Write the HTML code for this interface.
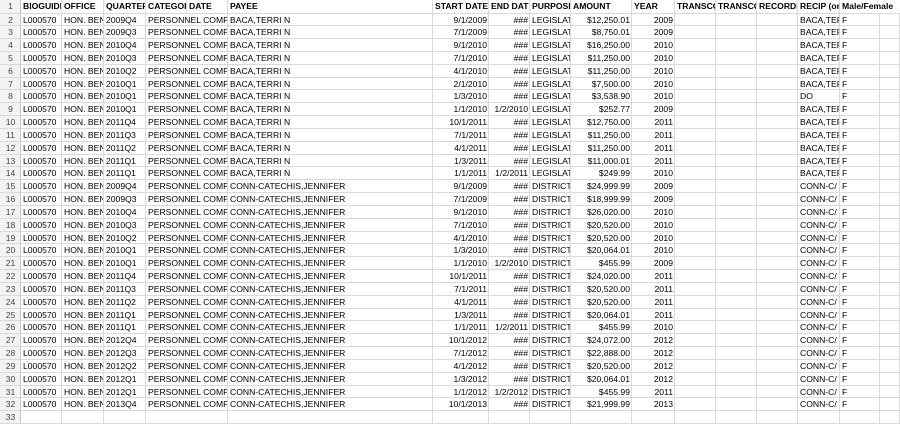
<!DOCTYPE html>
<html><head><style>
body{margin:0;width:900px;height:416px;overflow:hidden;background:#fff;font-family:"Liberation Sans",Arial,sans-serif;font-size:8.6px;color:#000}
.r{display:flex;height:12.83px;line-height:12.83px;white-space:nowrap}
.h{height:13.5px;line-height:13.5px;font-weight:bold}
.r>span{box-sizing:border-box;border-right:1px solid #dadada;border-bottom:1px solid #dadada;overflow:hidden;padding:0 1px 0 2px;flex:none}
.r>span:nth-child(1){width:21px;background:#f3f3f3;color:#444;text-align:center;font-weight:normal;border-right:1px solid #c8c8c8}
.r>span:nth-child(2){width:41px}
.r>span:nth-child(3){width:42px}
.r>span:nth-child(4){width:42px}
.r>span:nth-child(5){width:82px}
.r>span:nth-child(6){width:205px}
.r>span:nth-child(7){width:56px;text-align:right}
.r>span:nth-child(8){width:41px;text-align:right}
.r>span:nth-child(9){width:41px}
.r>span:nth-child(10){width:61px;text-align:right}
.r>span:nth-child(11){width:43px;text-align:right}
.r>span:nth-child(12){width:41px}
.r>span:nth-child(13){width:41px}
.r>span:nth-child(14){width:41px}
.r>span:nth-child(15){width:42px}
.r>span:nth-child(16){width:40px}
.r>span:nth-child(17){width:20px}
.h>span.hh{text-align:left}
</style></head><body>
<div class="r h"><span>1</span><span class="hh" style="width:41px">BIOGUIDE</span><span class="hh" style="width:42px">OFFICE</span><span class="hh" style="width:42px">QUARTER</span><span class="hh" style="width:41px">CATEGOR</span><span class="hh" style="width:41px">DATE</span><span class="hh" style="width:205px">PAYEE</span><span class="hh" style="width:56px">START DATE</span><span class="hh" style="width:41px">END DATE</span><span class="hh" style="width:41px">PURPOSE</span><span class="hh" style="width:61px">AMOUNT</span><span class="hh" style="width:43px">YEAR</span><span class="hh" style="width:41px">TRANSCO</span><span class="hh" style="width:41px">TRANSCO</span><span class="hh" style="width:41px">RECORDI</span><span class="hh" style="width:42px">RECIP (or</span><span class="hh" style="width:60px;border-right:none">Male/Female</span></div>
<div class="r"><span>2</span><span>L000570</span><span>HON. BEN</span><span>2009Q4</span><span>PERSONNEL COMPE</span><span>BACA,TERRI N</span><span>9/1/2009</span><span>###</span><span>LEGISLAT</span><span>$12,250.01</span><span>2009</span><span></span><span></span><span></span><span>BACA,TER</span><span>F</span><span></span></div>
<div class="r"><span>3</span><span>L000570</span><span>HON. BEN</span><span>2009Q3</span><span>PERSONNEL COMPE</span><span>BACA,TERRI N</span><span>7/1/2009</span><span>###</span><span>LEGISLAT</span><span>$8,750.01</span><span>2009</span><span></span><span></span><span></span><span>BACA,TER</span><span>F</span><span></span></div>
<div class="r"><span>4</span><span>L000570</span><span>HON. BEN</span><span>2010Q4</span><span>PERSONNEL COMPE</span><span>BACA,TERRI N</span><span>9/1/2010</span><span>###</span><span>LEGISLAT</span><span>$16,250.00</span><span>2010</span><span></span><span></span><span></span><span>BACA,TER</span><span>F</span><span></span></div>
<div class="r"><span>5</span><span>L000570</span><span>HON. BEN</span><span>2010Q3</span><span>PERSONNEL COMPE</span><span>BACA,TERRI N</span><span>7/1/2010</span><span>###</span><span>LEGISLAT</span><span>$11,250.00</span><span>2010</span><span></span><span></span><span></span><span>BACA,TER</span><span>F</span><span></span></div>
<div class="r"><span>6</span><span>L000570</span><span>HON. BEN</span><span>2010Q2</span><span>PERSONNEL COMPE</span><span>BACA,TERRI N</span><span>4/1/2010</span><span>###</span><span>LEGISLAT</span><span>$11,250.00</span><span>2010</span><span></span><span></span><span></span><span>BACA,TER</span><span>F</span><span></span></div>
<div class="r"><span>7</span><span>L000570</span><span>HON. BEN</span><span>2010Q1</span><span>PERSONNEL COMPE</span><span>BACA,TERRI N</span><span>2/1/2010</span><span>###</span><span>LEGISLAT</span><span>$7,500.00</span><span>2010</span><span></span><span></span><span></span><span>BACA,TER</span><span>F</span><span></span></div>
<div class="r"><span>8</span><span>L000570</span><span>HON. BEN</span><span>2010Q1</span><span>PERSONNEL COMPE</span><span>BACA,TERRI N</span><span>1/3/2010</span><span>###</span><span>LEGISLAT</span><span>$3,538.90</span><span>2010</span><span></span><span></span><span></span><span>DO</span><span>F</span><span></span></div>
<div class="r"><span>9</span><span>L000570</span><span>HON. BEN</span><span>2010Q1</span><span>PERSONNEL COMPE</span><span>BACA,TERRI N</span><span>1/1/2010</span><span>1/2/2010</span><span>LEGISLAT</span><span>$252.77</span><span>2009</span><span></span><span></span><span></span><span>BACA,TER</span><span>F</span><span></span></div>
<div class="r"><span>10</span><span>L000570</span><span>HON. BEN</span><span>2011Q4</span><span>PERSONNEL COMPE</span><span>BACA,TERRI N</span><span>10/1/2011</span><span>###</span><span>LEGISLAT</span><span>$12,750.00</span><span>2011</span><span></span><span></span><span></span><span>BACA,TER</span><span>F</span><span></span></div>
<div class="r"><span>11</span><span>L000570</span><span>HON. BEN</span><span>2011Q3</span><span>PERSONNEL COMPE</span><span>BACA,TERRI N</span><span>7/1/2011</span><span>###</span><span>LEGISLAT</span><span>$11,250.00</span><span>2011</span><span></span><span></span><span></span><span>BACA,TER</span><span>F</span><span></span></div>
<div class="r"><span>12</span><span>L000570</span><span>HON. BEN</span><span>2011Q2</span><span>PERSONNEL COMPE</span><span>BACA,TERRI N</span><span>4/1/2011</span><span>###</span><span>LEGISLAT</span><span>$11,250.00</span><span>2011</span><span></span><span></span><span></span><span>BACA,TER</span><span>F</span><span></span></div>
<div class="r"><span>13</span><span>L000570</span><span>HON. BEN</span><span>2011Q1</span><span>PERSONNEL COMPE</span><span>BACA,TERRI N</span><span>1/3/2011</span><span>###</span><span>LEGISLAT</span><span>$11,000.01</span><span>2011</span><span></span><span></span><span></span><span>BACA,TER</span><span>F</span><span></span></div>
<div class="r"><span>14</span><span>L000570</span><span>HON. BEN</span><span>2011Q1</span><span>PERSONNEL COMPE</span><span>BACA,TERRI N</span><span>1/1/2011</span><span>1/2/2011</span><span>LEGISLAT</span><span>$249.99</span><span>2010</span><span></span><span></span><span></span><span>BACA,TER</span><span>F</span><span></span></div>
<div class="r"><span>15</span><span>L000570</span><span>HON. BEN</span><span>2009Q4</span><span>PERSONNEL COMPE</span><span>CONN-CATECHIS,JENNIFER</span><span>9/1/2009</span><span>###</span><span>DISTRICT</span><span>$24,999.99</span><span>2009</span><span></span><span></span><span></span><span>CONN-C/</span><span>F</span><span></span></div>
<div class="r"><span>16</span><span>L000570</span><span>HON. BEN</span><span>2009Q3</span><span>PERSONNEL COMPE</span><span>CONN-CATECHIS,JENNIFER</span><span>7/1/2009</span><span>###</span><span>DISTRICT</span><span>$18,999.99</span><span>2009</span><span></span><span></span><span></span><span>CONN-C/</span><span>F</span><span></span></div>
<div class="r"><span>17</span><span>L000570</span><span>HON. BEN</span><span>2010Q4</span><span>PERSONNEL COMPE</span><span>CONN-CATECHIS,JENNIFER</span><span>9/1/2010</span><span>###</span><span>DISTRICT</span><span>$26,020.00</span><span>2010</span><span></span><span></span><span></span><span>CONN-C/</span><span>F</span><span></span></div>
<div class="r"><span>18</span><span>L000570</span><span>HON. BEN</span><span>2010Q3</span><span>PERSONNEL COMPE</span><span>CONN-CATECHIS,JENNIFER</span><span>7/1/2010</span><span>###</span><span>DISTRICT</span><span>$20,520.00</span><span>2010</span><span></span><span></span><span></span><span>CONN-C/</span><span>F</span><span></span></div>
<div class="r"><span>19</span><span>L000570</span><span>HON. BEN</span><span>2010Q2</span><span>PERSONNEL COMPE</span><span>CONN-CATECHIS,JENNIFER</span><span>4/1/2010</span><span>###</span><span>DISTRICT</span><span>$20,520.00</span><span>2010</span><span></span><span></span><span></span><span>CONN-C/</span><span>F</span><span></span></div>
<div class="r"><span>20</span><span>L000570</span><span>HON. BEN</span><span>2010Q1</span><span>PERSONNEL COMPE</span><span>CONN-CATECHIS,JENNIFER</span><span>1/3/2010</span><span>###</span><span>DISTRICT</span><span>$20,064.01</span><span>2010</span><span></span><span></span><span></span><span>CONN-C/</span><span>F</span><span></span></div>
<div class="r"><span>21</span><span>L000570</span><span>HON. BEN</span><span>2010Q1</span><span>PERSONNEL COMPE</span><span>CONN-CATECHIS,JENNIFER</span><span>1/1/2010</span><span>1/2/2010</span><span>DISTRICT</span><span>$455.99</span><span>2009</span><span></span><span></span><span></span><span>CONN-C/</span><span>F</span><span></span></div>
<div class="r"><span>22</span><span>L000570</span><span>HON. BEN</span><span>2011Q4</span><span>PERSONNEL COMPE</span><span>CONN-CATECHIS,JENNIFER</span><span>10/1/2011</span><span>###</span><span>DISTRICT</span><span>$24,020.00</span><span>2011</span><span></span><span></span><span></span><span>CONN-C/</span><span>F</span><span></span></div>
<div class="r"><span>23</span><span>L000570</span><span>HON. BEN</span><span>2011Q3</span><span>PERSONNEL COMPE</span><span>CONN-CATECHIS,JENNIFER</span><span>7/1/2011</span><span>###</span><span>DISTRICT</span><span>$20,520.00</span><span>2011</span><span></span><span></span><span></span><span>CONN-C/</span><span>F</span><span></span></div>
<div class="r"><span>24</span><span>L000570</span><span>HON. BEN</span><span>2011Q2</span><span>PERSONNEL COMPE</span><span>CONN-CATECHIS,JENNIFER</span><span>4/1/2011</span><span>###</span><span>DISTRICT</span><span>$20,520.00</span><span>2011</span><span></span><span></span><span></span><span>CONN-C/</span><span>F</span><span></span></div>
<div class="r"><span>25</span><span>L000570</span><span>HON. BEN</span><span>2011Q1</span><span>PERSONNEL COMPE</span><span>CONN-CATECHIS,JENNIFER</span><span>1/3/2011</span><span>###</span><span>DISTRICT</span><span>$20,064.01</span><span>2011</span><span></span><span></span><span></span><span>CONN-C/</span><span>F</span><span></span></div>
<div class="r"><span>26</span><span>L000570</span><span>HON. BEN</span><span>2011Q1</span><span>PERSONNEL COMPE</span><span>CONN-CATECHIS,JENNIFER</span><span>1/1/2011</span><span>1/2/2011</span><span>DISTRICT</span><span>$455.99</span><span>2010</span><span></span><span></span><span></span><span>CONN-C/</span><span>F</span><span></span></div>
<div class="r"><span>27</span><span>L000570</span><span>HON. BEN</span><span>2012Q4</span><span>PERSONNEL COMPE</span><span>CONN-CATECHIS,JENNIFER</span><span>10/1/2012</span><span>###</span><span>DISTRICT</span><span>$24,072.00</span><span>2012</span><span></span><span></span><span></span><span>CONN-C/</span><span>F</span><span></span></div>
<div class="r"><span>28</span><span>L000570</span><span>HON. BEN</span><span>2012Q3</span><span>PERSONNEL COMPE</span><span>CONN-CATECHIS,JENNIFER</span><span>7/1/2012</span><span>###</span><span>DISTRICT</span><span>$22,888.00</span><span>2012</span><span></span><span></span><span></span><span>CONN-C/</span><span>F</span><span></span></div>
<div class="r"><span>29</span><span>L000570</span><span>HON. BEN</span><span>2012Q2</span><span>PERSONNEL COMPE</span><span>CONN-CATECHIS,JENNIFER</span><span>4/1/2012</span><span>###</span><span>DISTRICT</span><span>$20,520.00</span><span>2012</span><span></span><span></span><span></span><span>CONN-C/</span><span>F</span><span></span></div>
<div class="r"><span>30</span><span>L000570</span><span>HON. BEN</span><span>2012Q1</span><span>PERSONNEL COMPE</span><span>CONN-CATECHIS,JENNIFER</span><span>1/3/2012</span><span>###</span><span>DISTRICT</span><span>$20,064.01</span><span>2012</span><span></span><span></span><span></span><span>CONN-C/</span><span>F</span><span></span></div>
<div class="r"><span>31</span><span>L000570</span><span>HON. BEN</span><span>2012Q1</span><span>PERSONNEL COMPE</span><span>CONN-CATECHIS,JENNIFER</span><span>1/1/2012</span><span>1/2/2012</span><span>DISTRICT</span><span>$455.99</span><span>2011</span><span></span><span></span><span></span><span>CONN-C/</span><span>F</span><span></span></div>
<div class="r"><span>32</span><span>L000570</span><span>HON. BEN</span><span>2013Q4</span><span>PERSONNEL COMPE</span><span>CONN-CATECHIS,JENNIFER</span><span>10/1/2013</span><span>###</span><span>DISTRICT</span><span>$21,999.99</span><span>2013</span><span></span><span></span><span></span><span>CONN-C/</span><span>F</span><span></span></div>
<div class="r"><span>33</span><span></span><span></span><span></span><span></span><span></span><span></span><span></span><span></span><span></span><span></span><span></span><span></span><span></span><span></span><span></span><span></span></div>
</body></html>
